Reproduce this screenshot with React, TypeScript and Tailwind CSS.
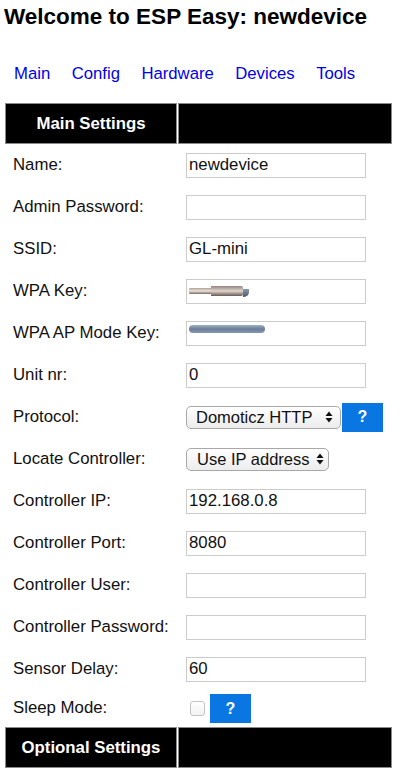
import React from "react";

const Arrows = () => (
  <svg width="8" height="12" viewBox="0 0 8 12" className="shrink-0">
    <path d="M4 0.5 L7.5 5 L0.5 5 Z" fill="#111" />
    <path d="M4 11.5 L7.5 7 L0.5 7 Z" fill="#111" />
  </svg>
);

const Help = () => (
  <div className="w-[41px] h-[29px] bg-[#0a76e2] flex items-center justify-center text-white font-bold text-[16px] leading-none">
    ?
  </div>
);

const TextBox = ({ value, children }: { value?: string; children?: React.ReactNode }) => (
  <div className="w-[180px] h-[25px] border border-[#cccccc] bg-white pl-[2px] flex items-center text-[16.8px] leading-none text-[#111] overflow-hidden">
    {value}
    {children}
  </div>
);

const Row = ({ label, children, h = "h-[42px]" }: { label: string; children: React.ReactNode; h?: string }) => (
  <div className={`flex items-center ${h}`}>
    <div className="w-[173px] pl-[8px] text-[16.8px] leading-none text-[#111]">{label}</div>
    <div className="pl-[8px] flex items-center">{children}</div>
  </div>
);

const Header = ({ title }: { title: string }) => (
  <div className="flex h-[41px] gap-[1px]">
    <div className="w-[172px] bg-black border border-[#8a8a8a] flex items-center justify-center text-white font-bold text-[16.8px]">
      {title}
    </div>
    <div className="flex-1 bg-black border border-[#8a8a8a]" />
  </div>
);

export default function App() {
  return (
    <div className="w-[400px] min-h-[776px] bg-white text-black font-['Liberation_Sans',Arial,sans-serif]">
      <h1 className="text-[22.5px] font-bold leading-[26px] pt-[4px] pl-[4px]">Welcome to ESP Easy: newdevice</h1>
      <nav className="mt-[34px] h-[20px] pl-[14px] flex gap-[21.5px] text-[16.7px] leading-[20px] text-[#0000ee]">
        <span>Main</span>
        <span>Config</span>
        <span>Hardware</span>
        <span>Devices</span>
        <span>Tools</span>
      </nav>
      <div className="mt-[19px] ml-[5px] w-[387px]">
        <Header title="Main Settings" />
        <Row label="Name:">
          <TextBox value="newdevice" />
        </Row>
        <Row label="Admin Password:">
          <TextBox />
        </Row>
        <Row label="SSID:">
          <TextBox value="GL-mini" />
        </Row>
        <Row label="WPA Key:">
          <TextBox>
            <div className="flex items-center">
              <div className="w-[22px] h-[6px] bg-gradient-to-b from-[#b0a098] via-[#eee4de] to-[#7a6a62] rounded-l-[1px]" />
              <div className="w-[32px] h-[10px] bg-gradient-to-b from-[#948480] via-[#e0d6d0] to-[#6a5a52] rounded-r-[2px]" />
              <div className="w-[6px] h-[8px] mt-[4px] rounded-br-[5px] bg-gradient-to-b from-[#8a9ab0] to-[#4a5a70]" />
            </div>
          </TextBox>
        </Row>
        <Row label="WPA AP Mode Key:">
          <TextBox>
            <div className="w-[76px] h-[8px] -mt-[8px] rounded-full bg-gradient-to-b from-[#a2b2c6] via-[#6a7e98] to-[#8898b0]" />
          </TextBox>
        </Row>
        <Row label="Unit nr:">
          <TextBox value="0" />
        </Row>
        <Row label="Protocol:">
          <div className="flex items-center gap-[1px]">
            <div className="w-[155px] h-[23px] rounded-[5px] border border-[#a8a8a8] bg-gradient-to-b from-white to-[#ececec] flex items-center justify-between pl-[9px] pr-[7px] text-[16.5px] leading-none text-[#111]">
              <span>Domoticz HTTP</span>
              <Arrows />
            </div>
            <Help />
          </div>
        </Row>
        <Row label="Locate Controller:">
          <div className="w-[143px] h-[23px] rounded-[5px] border border-[#a8a8a8] bg-gradient-to-b from-white to-[#ececec] flex items-center justify-between pl-[10px] pr-[4px] text-[16.5px] leading-none text-[#111]">
            <span>Use IP address</span>
            <Arrows />
          </div>
        </Row>
        <Row label="Controller IP:">
          <TextBox value="192.168.0.8" />
        </Row>
        <Row label="Controller Port:">
          <TextBox value="8080" />
        </Row>
        <Row label="Controller User:">
          <TextBox />
        </Row>
        <Row label="Controller Password:">
          <TextBox />
        </Row>
        <Row label="Sensor Delay:">
          <TextBox value="60" />
        </Row>
        <Row label="Sleep Mode:" h="h-[37px]">
          <div className="flex items-center">
            <div className="ml-[4px] w-[15px] h-[15px] rounded-[3px] border border-[#c4c4c4] bg-gradient-to-b from-white to-[#f2f2f2]" />
            <div className="ml-[5px]">
              <Help />
            </div>
          </div>
        </Row>
        <Header title="Optional Settings" />
      </div>
    </div>
  );
}
